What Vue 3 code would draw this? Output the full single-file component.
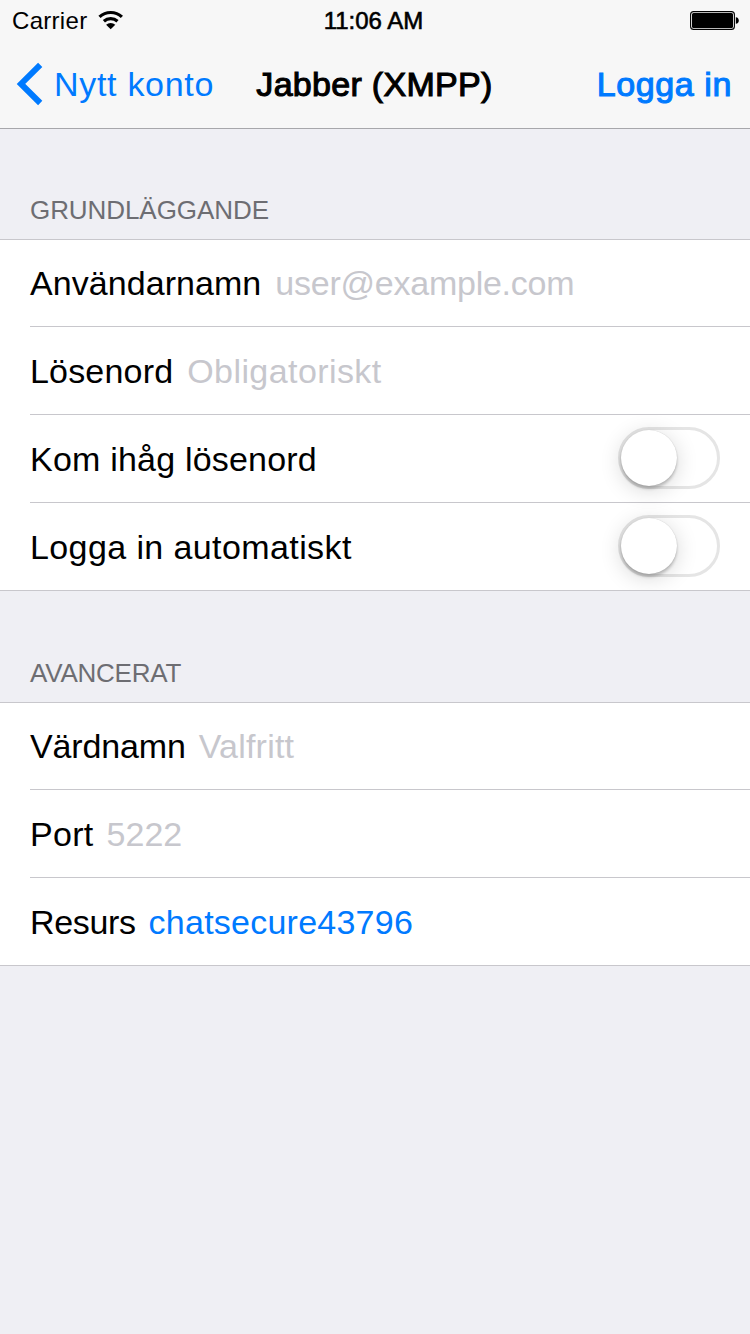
<script setup>
const groups = [
  {
    title: 'GRUNDLÄGGANDE',
    key: 'basic',
    rows: [
      { key: 'username', label: 'Användarnamn', placeholder: 'user@example.com' },
      { key: 'password', label: 'Lösenord', placeholder: 'Obligatoriskt' },
      { key: 'remember', label: 'Kom ihåg lösenord', toggle: true },
      { key: 'autologin', label: 'Logga in automatiskt', toggle: true },
    ],
  },
  {
    title: 'AVANCERAT',
    key: 'advanced',
    rows: [
      { key: 'hostname', label: 'Värdnamn', placeholder: 'Valfritt' },
      { key: 'port', label: 'Port', placeholder: '5222' },
      { key: 'resource', label: 'Resurs', value: 'chatsecure43796' },
    ],
  },
]
</script>

<template>
  <div class="screen">
    <header class="top">
      <div class="status">
        <div class="carrier">
          <span class="carrier-name">Carrier</span>
          <svg class="wifi" width="26" height="20" viewBox="0 0 26 20">
            <g fill="none" stroke="#000" stroke-width="3.2">
              <path d="M1.5 6.9a16.4 16.4 0 0 1 22.4 0" />
              <path d="M5.9 11.3a10.1 10.1 0 0 1 13.6 0" />
            </g>
            <path d="M12.7 19.2 8.1 14.7a6.8 6.8 0 0 1 9.2 0z" />
          </svg>
        </div>
        <span class="clock">11:06 AM</span>
        <svg class="battery" width="50" height="20" viewBox="0 0 50 20">
          <rect x="0.6" y="0.6" width="43.8" height="17.8" rx="3" fill="none" stroke="#000" stroke-width="1.1" />
          <rect x="2" y="2" width="41" height="15" rx="1.5" />
          <path d="M45.8 6.2c4 .3 4 6.3 0 6.6z" />
        </svg>
      </div>
      <nav class="nav">
        <a class="back">
          <svg width="28" height="44" viewBox="0 0 28 44">
            <path d="M24.2 2.8 5 21.9 24.2 41" fill="none" stroke="#007aff" stroke-width="6" />
          </svg>
          <span class="back-label">Nytt konto</span>
        </a>
        <h1 class="title">Jabber (XMPP)</h1>
        <a class="action">Logga in</a>
      </nav>
    </header>

    <section v-for="g in groups" :key="g.key" class="group" :class="g.key">
      <h2 class="heading"><span>{{ g.title }}</span></h2>
      <div class="list">
        <div v-for="r in g.rows" :key="r.key" class="row" :class="r.key">
          <span class="label">{{ r.label }}</span>
          <span v-if="r.placeholder" class="field placeholder">{{ r.placeholder }}</span>
          <span v-if="r.value" class="field value">{{ r.value }}</span>
          <span v-if="r.toggle" class="switch"><span class="knob"></span></span>
        </div>
      </div>
    </section>
  </div>
</template>

<style>
body {
  background: #efeff4;
}
</style>

<style scoped>
.screen {
  width: 750px;
  height: 1334px;
  overflow: hidden;
  background: #efeff4;
  color: #000;
  font-family: "Liberation Sans", Arial, sans-serif;
  font-size: 34px;
  white-space: nowrap;
}
.top {
  box-sizing: border-box;
  height: 129px;
  background: #f7f7f7;
  border-bottom: 1px solid #a7a7ab;
}
.status {
  display: grid;
  grid-template-columns: 1fr auto 1fr;
  height: 40px;
  padding: 0 10px 0 12px;
  font-size: 24px;
  line-height: 42px;
}
.carrier {
  display: flex;
  gap: 11px;
}
.carrier-name {
  letter-spacing: 0.3px;
}
.wifi {
  margin-top: 10px;
}
.clock {
  margin-right: 5px;
  -webkit-text-stroke: 0.6px #000;
}
.battery {
  justify-self: end;
  margin-top: 11px;
}
.nav {
  display: grid;
  grid-template-columns: 1fr auto 1fr;
  height: 88px;
  padding: 0 17px 0 16px;
  line-height: 88px;
}
.back {
  display: flex;
  gap: 10px;
  color: #007aff;
  letter-spacing: 0.7px;
}
.back svg {
  margin-top: 22px;
}
.title {
  margin: 0;
  font-size: 34px;
  font-weight: 400;
  letter-spacing: 0.3px;
  -webkit-text-stroke: 1.1px #000;
}
.action {
  justify-self: end;
  margin-right: 1px;
  color: #007aff;
  letter-spacing: 0.6px;
  -webkit-text-stroke: 1.1px #007aff;
}
.heading {
  display: flex;
  align-items: flex-end;
  height: 110px;
  margin: 0;
  padding-left: 30px;
  color: #6d6d72;
  font-size: 26px;
  font-weight: 400;
  letter-spacing: -0.07px;
  line-height: 58px;
}
.advanced .heading {
  height: 111px;
  letter-spacing: -0.22px;
}
.list {
  overflow: hidden;
  background: #fff;
  border-top: 1px solid #c8c7cc;
  border-bottom: 1px solid #c8c7cc;
}
.row {
  display: flex;
  align-items: flex-end;
  box-sizing: border-box;
  height: 88px;
  margin-left: 30px;
  padding-right: 30px;
  border-bottom: 1px solid #c8c7cc;
  line-height: 85px;
}
.row:first-child {
  height: 87px;
}
.row:last-child {
  height: 87px;
  border-bottom: 0;
}
.field {
  margin-left: 14px;
}
.placeholder {
  color: #c7c7cd;
}
.value {
  color: #007aff;
}

/* Optical tracking per row */
.username .label { letter-spacing: 0.06px; }
.username .field { letter-spacing: -0.24px; }
.password .label { letter-spacing: 0.18px; }
.password .field { letter-spacing: 0.42px; }
.remember .label { letter-spacing: 0.2px; }
.autologin .label { letter-spacing: 0.4px; }
.hostname .label { letter-spacing: -0.15px; }
.hostname .field { margin-left: 13px; letter-spacing: 0.22px; }
.port .label { letter-spacing: 0.3px; }
.port .field { margin-left: 13px; }
.resource .label { letter-spacing: -0.35px; }
.resource .field { margin-left: 13px; letter-spacing: 0.24px; }

.switch {
  box-sizing: border-box;
  width: 102px;
  height: 62px;
  margin: 0 0 13px auto;
  border: 3px solid #e5e5e5;
  border-radius: 31px;
}
.knob {
  display: block;
  width: 56px;
  height: 56px;
  border-radius: 50%;
  background: #fff;
  box-shadow: 0 0 1px rgba(0, 0, 0, 0.2), 0 3px 3px rgba(0, 0, 0, 0.2), 0 4px 22px rgba(0, 0, 0, 0.16);
}
</style>
